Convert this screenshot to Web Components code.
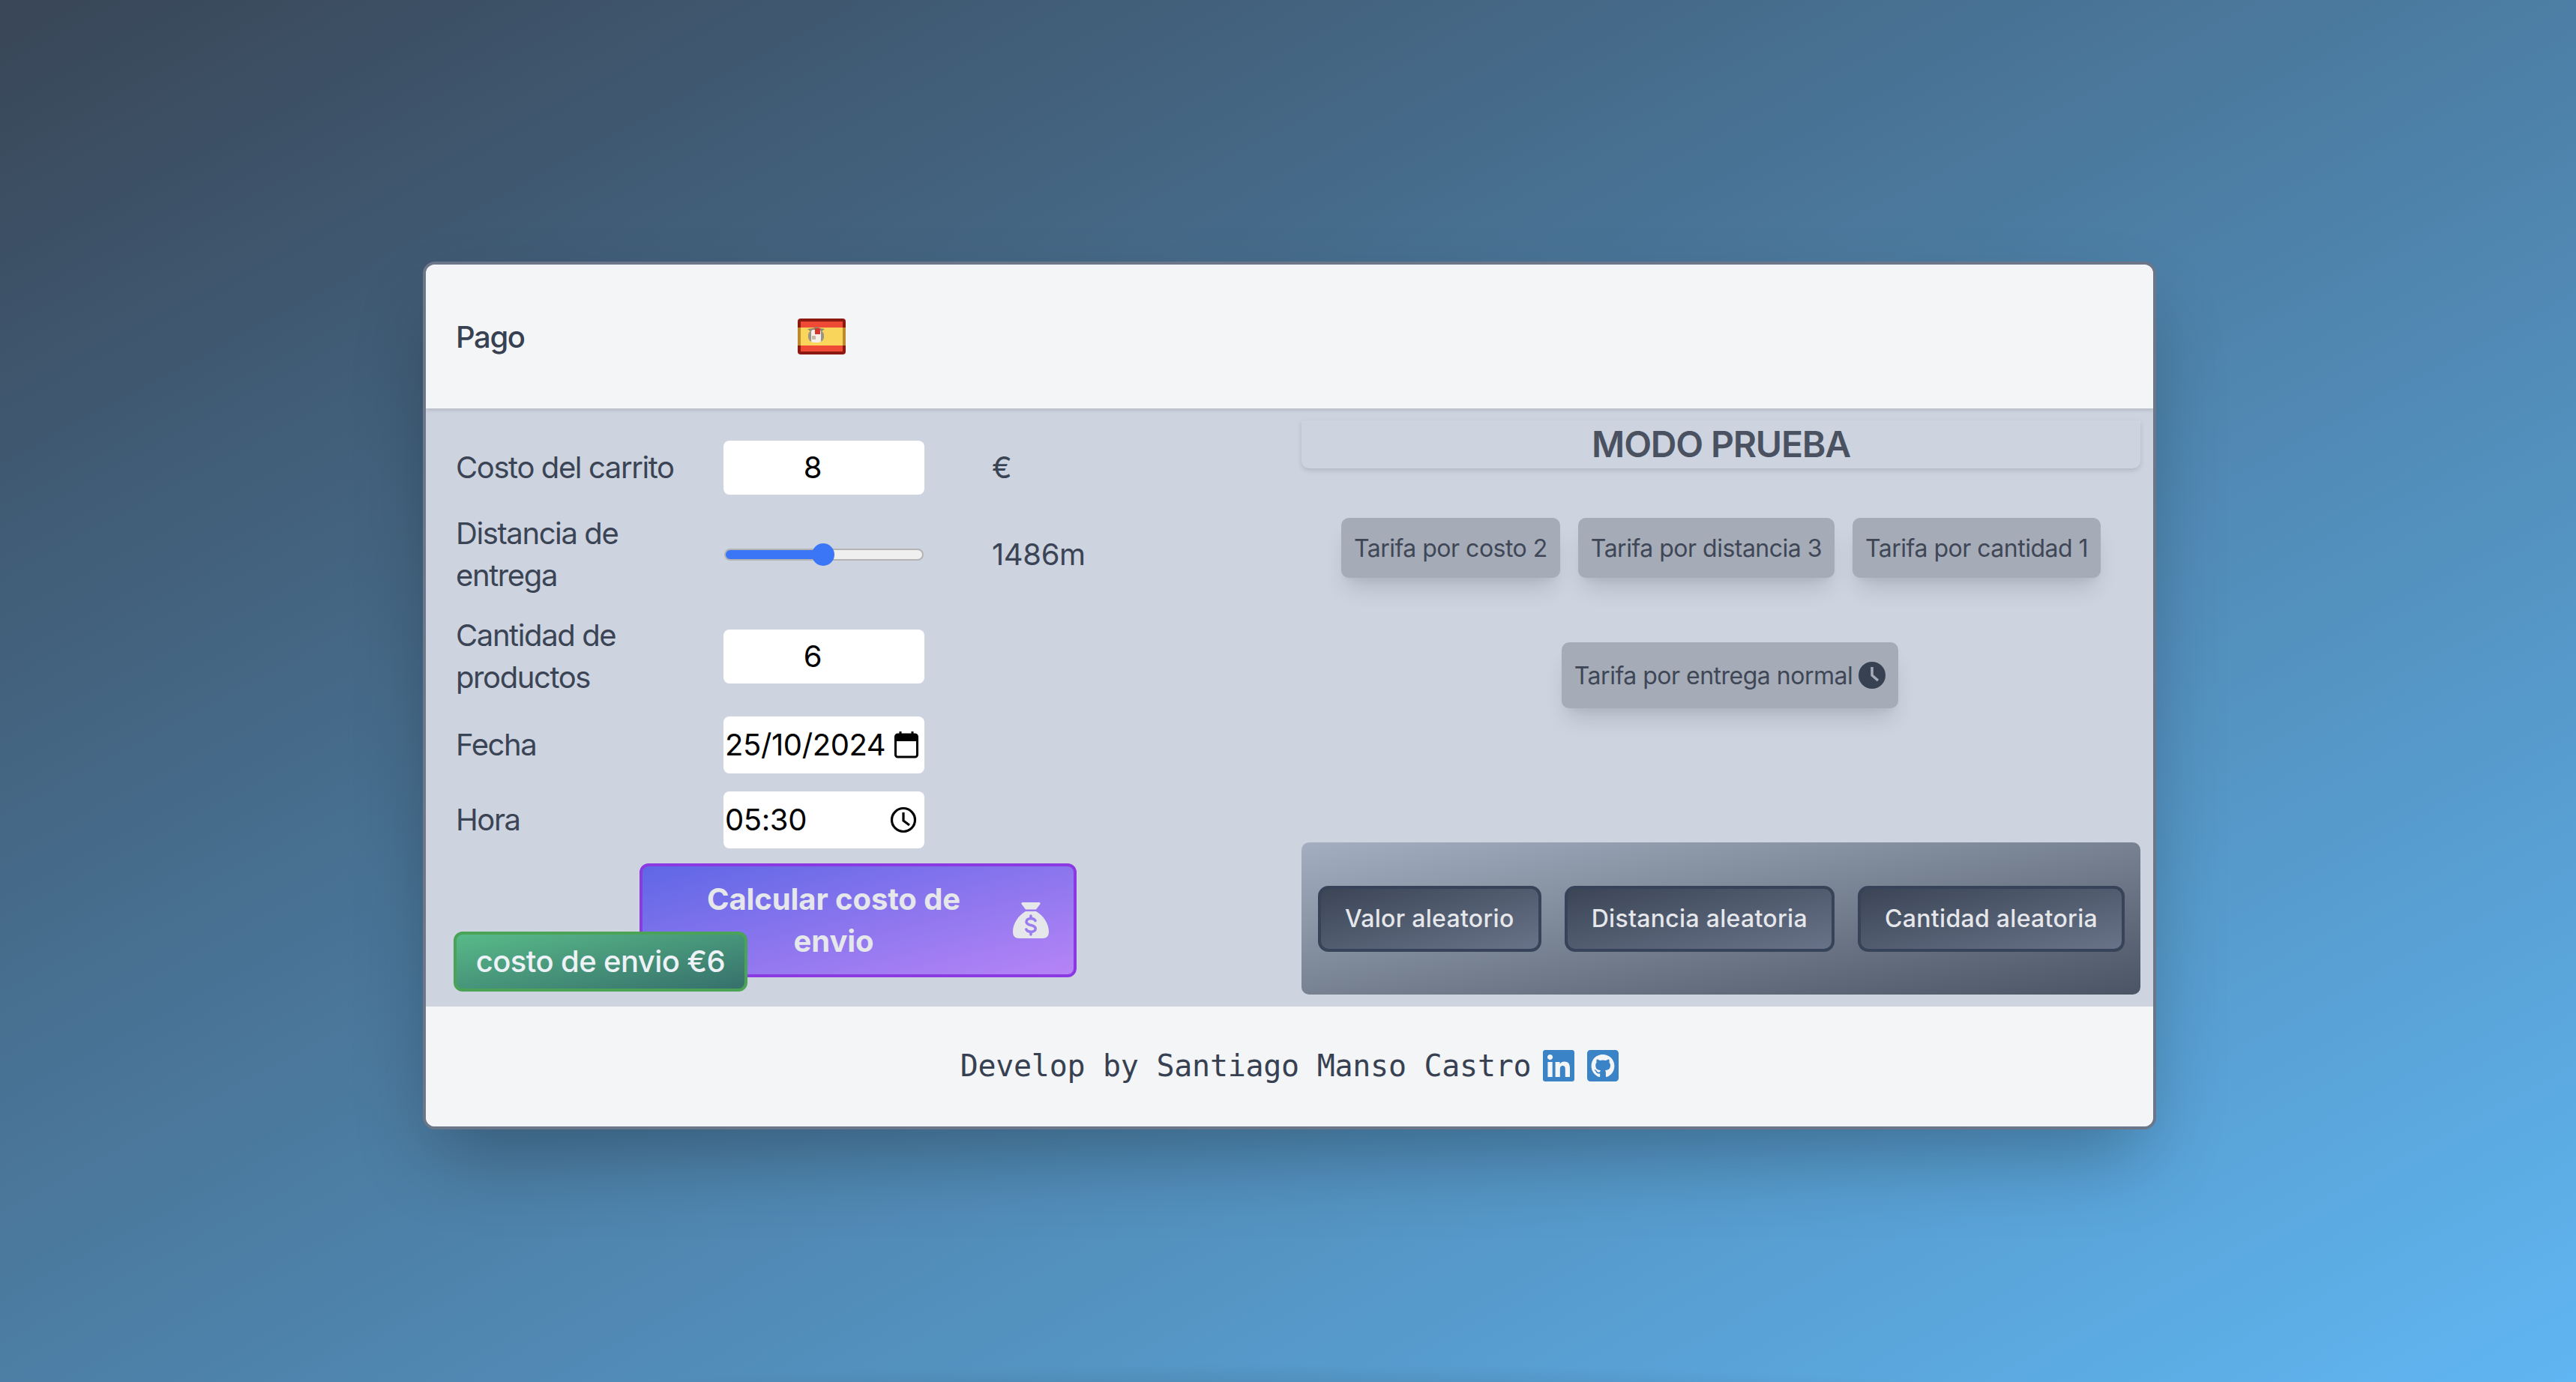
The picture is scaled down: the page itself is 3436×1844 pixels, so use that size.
<!DOCTYPE html>
<html lang="es">
<head>
<meta charset="utf-8">
<title>Pago</title>
<style>
  html, body { margin: 0; height: 100%; }
  body {
    box-sizing: border-box;
    min-height: 100vh;
    padding: 12px 0 0 4px;
    display: flex;
    align-items: center;
    justify-content: center;
    overflow: hidden;
    /* la primera capa es la sombra de lo que queda debajo del borde de la ventana */
    background:
        radial-gradient(ellipse 1050px 50px at 1700px 1870px, rgba(0,0,0,.14), rgba(0,0,0,0)),
        linear-gradient(to bottom right, #394657, #60b6f2);
    font-family: Inter, "Noto Sans", sans-serif;
  }
</style>
</head>
<body>
<pago-card>
  <pago-header slot="header"></pago-header>
  <pago-form slot="form"></pago-form>
  <modo-prueba slot="test"></modo-prueba>
  <pago-footer slot="footer"></pago-footer>
</pago-card>

<script>
class PagoCard extends HTMLElement {
    constructor() {
        super();
        this.attachShadow({ mode: 'open' });
        this.shadowRoot.innerHTML = `
        <style>
            :host {
                display: flex;
                flex-direction: column;
                width: 2304px;
                border: 4px solid #6b7789;
                border-radius: 16px;
                overflow: hidden;
                box-shadow: 0 50px 100px -20px rgba(0,0,0,.3);
                background: #cdd4e0;
            }
            .body { display: flex; height: 798px; }
        </style>
        <slot name="header"></slot>
        <div class="body">
            <slot name="form"></slot>
            <slot name="test"></slot>
        </div>
        <slot name="footer"></slot>
        `;
    }
}

class PagoHeader extends HTMLElement {
    constructor() {
        super();
        this.attachShadow({ mode: 'open' });
        this.shadowRoot.innerHTML = `
        <style>
            :host {
                display: flex;
                align-items: center;
                position: relative;
                z-index: 1;
                height: 192px;
                padding-left: 40px;
                background: #f3f5f7;
                box-shadow: 0 2px 5px rgba(0,0,0,.14);
            }
            .title { width: 456px; font-size: 40px; font-weight: 500; letter-spacing: -1.4px; color: #374151; }
            svg { display: block; width: 64px; height: 48px; }
        </style>
        <span class="title">Pago</span>
        <svg viewBox="0 0 64 48">
            <rect width="64" height="48" rx="4" fill="#8c1a10"/>
            <rect x="0" y="12" width="64" height="24" fill="#bd8a2a"/>
            <rect x="4" y="4" width="56" height="8" fill="#ef4a36"/>
            <rect x="4" y="36" width="56" height="8" fill="#ef4a36"/>
            <rect x="4" y="12" width="56" height="24" fill="#f9d65b"/>
            <g style="filter: blur(.6px)">
                <path d="M13 14l7-1 5-2 5 2 6 1-4 3H17z" fill="#8f8a70"/>
                <rect x="14" y="16" width="21" height="15" rx="6" fill="#9a9486"/>
                <rect x="18" y="15" width="13" height="17" rx="3" fill="#f5efe8"/>
                <rect x="23" y="13" width="7" height="8" fill="#d5352c"/>
                <rect x="19" y="23" width="5" height="5" fill="#c9b8a8"/>
            </g>
        </svg>
        `;
    }
}

// caja blanca de los campos del formulario
class FieldBox extends HTMLElement {
    constructor() {
        super();
        this.attachShadow({ mode: 'open' });
        this.shadowRoot.innerHTML = `
        <style>
            :host {
                display: flex;
                align-items: center;
                justify-content: space-between;
                box-sizing: border-box;
                width: 268px;
                padding: 0 8px 0 2px;
                border-radius: 8px;
                background: #fff;
                color: #000;
                font-size: 40px;
                letter-spacing: -.4px;
            }
            :host([center]) { justify-content: center; height: 72px; padding: 0 34px 0 4px; }
            ::slotted(svg) { display: block; flex: none; }
        </style>
        <slot></slot>
        `;
    }
}

class RangeField extends HTMLElement {
    constructor() {
        super();
        this.attachShadow({ mode: 'open' });
        this.shadowRoot.innerHTML = `
        <style>
            :host { display: flex; align-items: center; width: 268px; height: 40px; }
            input {
                -webkit-appearance: none;
                appearance: none;
                display: block;
                width: 266px;
                height: 16px;
                margin: 0 1px;
                border-radius: 8px;
                box-sizing: border-box;
                border: 2px solid #b3b3b3;
                background: linear-gradient(to right, #3b76f6 50%, #efefef 50%);
                outline: none;
            }
            input::-webkit-slider-thumb {
                -webkit-appearance: none;
                width: 30px;
                height: 30px;
                border-radius: 50%;
                background: #3b76f6;
            }
        </style>
        <input type="range" min="0" max="3000" value="1486" aria-label="Distancia de entrega">
        `;
    }
}

class PagoForm extends HTMLElement {
    constructor() {
        super();
        this.attachShadow({ mode: 'open' });
        this.shadowRoot.innerHTML = `
        <style>
            :host {
                display: block;
                position: relative;
                box-sizing: border-box;
                width: 1168px;
                padding: 43px 0 0 40px;
                color: #3b4454;
                font-size: 40px;
                letter-spacing: -1.4px;
                line-height: 56px;
            }
            .rows {
                display: grid;
                grid-template-columns: 357px 268px auto;
                grid-template-rows: 72px 112px 112px 76px 76px;
                row-gap: 24px;
                align-items: center;
            }
            .rows > span:nth-child(3n) { padding-left: 90px; letter-spacing: -.4px; }
            field-box { align-self: stretch; }
            field-box[center] { align-self: center; }
            .action { display: flex; margin: 20px 0 0 245px; }
            button {
                display: flex;
                align-items: center;
                gap: 16px;
                box-sizing: border-box;
                width: 583px;
                height: 152px;
                padding: 0 33px 0 32px;
                border: 4px solid #8a3ae0;
                border-radius: 12px;
                background: linear-gradient(to bottom right, #5f67e6, #b684f6);
                color: #e5e7eb;
                font: 700 40px/56px Inter, "Noto Sans", sans-serif;
                letter-spacing: -.1px;
                text-align: center;
            }
            button span { flex: 1; }
            button svg { display: block; flex: none; width: 48px; height: 48px; }
            .badge {
                position: absolute;
                left: 37px;
                top: 698px;
                display: flex;
                align-items: center;
                justify-content: center;
                box-sizing: border-box;
                width: 392px;
                height: 80px;
                border: 4px solid #4aa356;
                border-radius: 12px;
                background: linear-gradient(to bottom right, #58ba88, #36706c);
                color: #edf2f7;
                font-weight: 500;
                letter-spacing: -.6px;
            }
        </style>
        <div class="rows">
            <span>Costo del carrito</span>
            <field-box center>8</field-box>
            <span>€</span>

            <span>Distancia de<br>entrega</span>
            <range-field></range-field>
            <span>1486m</span>

            <span>Cantidad de<br>productos</span>
            <field-box center>6</field-box>
            <span></span>

            <span>Fecha</span>
            <field-box>
                25/10/2024
                <svg width="32" height="36" viewBox="0 0 32 36" fill="none">
                    <path d="M8 0v6M24 0v6" stroke="#000" stroke-width="3"/>
                    <rect x="1.500" y="4" width="29" height="30" rx="3" stroke="#000" stroke-width="3"/>
                    <rect x="1.500" y="4" width="29" height="9" rx="2" fill="#000"/>
                </svg>
            </field-box>
            <span></span>

            <span>Hora</span>
            <field-box>
                05:30
                <svg width="36" height="36" viewBox="0 0 36 36" fill="none" stroke="#000" stroke-width="3.200" style="margin-right:2px">
                    <circle cx="18" cy="18" r="15.500"/>
                    <path d="M18 8v11l8 6"/>
                </svg>
            </field-box>
            <span></span>
        </div>
        <div class="action">
            <button type="button">
                <span>Calcular costo de<br>envio</span>
                <svg viewBox="0 0 48 48">
                    <path fill="#e5e7eb" d="M13 0h22c1.500 0 2 1.200 1.300 2.400L31 9.500H17L11.700 2.400C11 1.200 11.500 0 13 0zM17 12h14c9 5 17 16 17 27 0 6-3 9-8 9H8c-5 0-8-3-8-9 0-11 8-22 17-27z"/>
                    <path fill="none" stroke="#9a7cf0" stroke-width="3.600" stroke-linecap="round" d="M30 24.500c-1-2-3.500-3-6-3-3.500 0-6 1.800-6 4.400 0 6 12.200 3 12.200 9 0 2.600-2.700 4.400-6.200 4.400-2.700 0-5.200-1.100-6.200-3.200"/>
                    <path fill="none" stroke="#9a7cf0" stroke-width="3.600" stroke-linecap="round" d="M24 18v3.500M24 40v3"/>
                </svg>
            </button>
        </div>
        <div class="badge">costo de envio €6</div>
        `;
    }
}

class TarifaChip extends HTMLElement {
    constructor() {
        super();
        this.attachShadow({ mode: 'open' });
        this.shadowRoot.innerHTML = `
        <style>
            :host {
                display: inline-flex;
                align-items: center;
                gap: 8px;
                height: 80px;
                padding: 0 17px;
                border-radius: 10px;
                background: #a5acb8;
                color: #3f4757;
                font-size: 32px;
                letter-spacing: -.5px;
                box-shadow: 0 20px 30px -8px rgba(0,0,0,.14), 0 8px 12px -6px rgba(0,0,0,.05);
            }
            :host([tall]) { height: 88px; }
            ::slotted(svg) { display: block; width: 36px; height: 36px; }
        </style>
        <slot></slot>
        `;
    }
}

class RandomButton extends HTMLElement {
    constructor() {
        super();
        this.attachShadow({ mode: 'open' });
        this.shadowRoot.innerHTML = `
        <style>
            :host {
                display: flex;
                align-items: center;
                justify-content: center;
                box-sizing: border-box;
                height: 88px;
                padding: 0 32px;
                border: 4px solid #364358;
                border-radius: 14px;
                background: linear-gradient(to bottom right, #3b4556, #687389);
                color: #e5e7eb;
                font-size: 32px;
                font-weight: 500;
                letter-spacing: .3px;
            }
        </style>
        <slot></slot>
        `;
    }
}

class ModoPrueba extends HTMLElement {
    constructor() {
        super();
        this.attachShadow({ mode: 'open' });
        this.shadowRoot.innerHTML = `
        <style>
            :host {
                display: flex;
                flex-direction: column;
                box-sizing: border-box;
                width: 1136px;
                padding: 16px 17px 16px 0;
            }
            h2 {
                margin: 0;
                height: 64px;
                border-radius: 0 0 10px 10px;
                box-shadow: 0 3px 6px rgba(0,0,0,.13);
                color: #4a5262;
                font-size: 48px;
                font-weight: 600;
                letter-spacing: -1.2px;
                line-height: 64px;
                text-align: center;
            }
            .row { display: flex; justify-content: center; gap: 24px; margin-top: 66px; }
            .row.second { margin: 86px 0 0 24px; }
            .random {
                display: flex;
                align-items: center;
                justify-content: space-between;
                margin-top: auto;
                height: 203px;
                padding: 0 21px 0 22px;
                border-radius: 10px;
                background: linear-gradient(to bottom right, #a3afc0, #4b5464);
            }
        </style>
        <h2>MODO PRUEBA</h2>
        <div class="row">
            <tarifa-chip>Tarifa por costo 2</tarifa-chip>
            <tarifa-chip>Tarifa por distancia 3</tarifa-chip>
            <tarifa-chip>Tarifa por cantidad 1</tarifa-chip>
        </div>
        <div class="row second">
            <tarifa-chip tall>
                Tarifa por entrega normal
                <svg viewBox="0 0 36 36">
                    <circle cx="18" cy="18" r="18" fill="#374151"/>
                    <path d="M18 7v11l8 7" fill="none" stroke="#a5acb8" stroke-width="3.500"/>
                </svg>
            </tarifa-chip>
        </div>
        <div class="random">
            <random-button>Valor aleatorio</random-button>
            <random-button>Distancia aleatoria</random-button>
            <random-button>Cantidad aleatoria</random-button>
        </div>
        `;
    }
}

class PagoFooter extends HTMLElement {
    constructor() {
        super();
        this.attachShadow({ mode: 'open' });
        this.shadowRoot.innerHTML = `
        <style>
            :host {
                display: flex;
                align-items: center;
                justify-content: center;
                gap: 16px;
                height: 160px;
                background: #f3f5f7;
                color: #374151;
                font-family: "DejaVu Sans Mono", "Liberation Mono", monospace;
                font-size: 40px;
                letter-spacing: -.28px;
            }
            span { margin-top: -2px; }
            svg { display: block; width: 42px; height: 48px; fill: #3a83c6; }
            .icons { display: flex; gap: 17px; margin-top: -2px; }
        </style>
        <span>Develop by Santiago Manso Castro</span>
        <div class="icons">
            <svg viewBox="0 0 448 512"><path d="M416 32H31.900C14.300 32 0 46.500 0 64.300v383.400C0 465.500 14.300 480 31.900 480H416c17.600 0 32-14.500 32-32.300V64.300c0-17.800-14.400-32.300-32-32.300zM135.400 416H69V202.200h66.500V416zm-33.200-243c-21.300 0-38.500-17.300-38.500-38.500S80.900 96 102.200 96c21.200 0 38.500 17.300 38.500 38.500 0 21.300-17.200 38.500-38.500 38.500zm282.100 243h-66.400V312c0-24.800-.5-56.700-34.500-56.700-34.600 0-39.900 27-39.900 54.900V416h-66.400V202.200h63.700v29.200h.9c8.900-16.800 30.600-34.500 62.900-34.500 67.200 0 79.700 44.300 79.700 101.900V416z"/></svg>
            <svg viewBox="0 0 448 512"><path d="M400 32H48C21.500 32 0 53.500 0 80v352c0 26.500 21.500 48 48 48h352c26.500 0 48-21.500 48-48V80c0-26.500-21.500-48-48-48zM277.300 415.700c-8.400 1.500-11.500-3.700-11.500-8 0-5.400.2-33 .2-55.300 0-15.600-5.200-25.500-11.300-30.700 37-4.100 76-9.200 76-73.100 0-18.200-6.500-27.300-17.100-39 1.700-4.300 7.400-22-1.700-45-13.900-4.300-45.700 17.900-45.700 17.900-13.200-3.700-27.500-5.600-41.600-5.600-14.100 0-28.400 1.900-41.600 5.600 0 0-31.800-22.200-45.700-17.900-9.100 22.900-3.500 40.600-1.700 45-10.600 11.700-15.600 20.800-15.600 39 0 63.600 37.300 69 74.300 73.100-4.800 4.300-9.100 11.700-10.600 22.300-9.500 4.300-33.800 11.700-48.300-13.900-9.100-15.800-25.500-17.100-25.500-17.100-16.200-.2-1.100 10.200-1.100 10.200 10.800 5 18.400 24.200 18.400 24.200 9.700 29.700 56.100 19.700 56.100 19.700 0 13.900.2 36.500.2 40.600 0 4.300-3 9.500-11.500 8-66-22.100-112.200-84.900-112.200-158.300 0-91.800 70.200-161.500 162-161.500S388 165.600 388 257.400c.1 73.400-44.700 136.300-110.700 158.300z"/></svg>
        </div>
        `;
    }
}

customElements.define('pago-card', PagoCard);
customElements.define('pago-header', PagoHeader);
customElements.define('field-box', FieldBox);
customElements.define('range-field', RangeField);
customElements.define('pago-form', PagoForm);
customElements.define('tarifa-chip', TarifaChip);
customElements.define('random-button', RandomButton);
customElements.define('modo-prueba', ModoPrueba);
customElements.define('pago-footer', PagoFooter);
</script>
</body>
</html>
